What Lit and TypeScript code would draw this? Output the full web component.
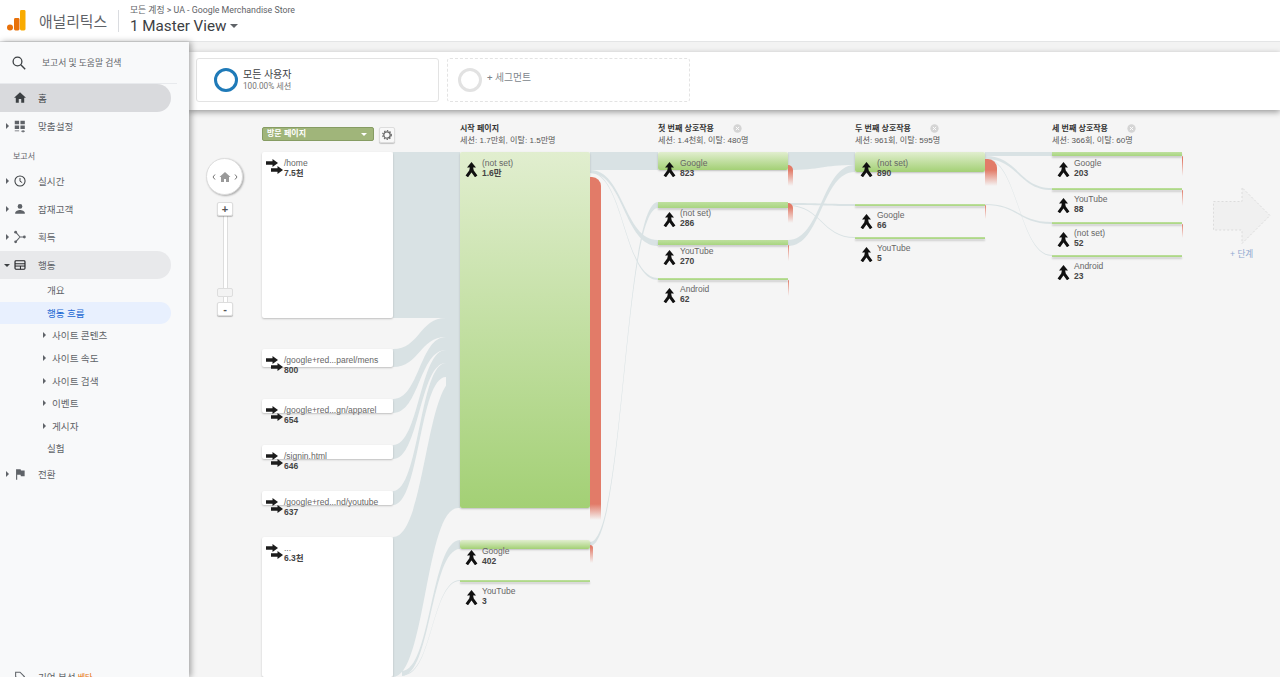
import { LitElement, html, css, svg } from "lit";
import { customElement } from "lit/decorators.js";

type FlowNode = {
  x: number;
  y: number;
  h: number;
  name: string;
  count: string;
  kind: "start" | "page";
  drop?: [number, number, number];
};

const OX = 189;
const OY = 110;

const nodes: FlowNode[] = [
  { x: 262, y: 152, h: 166, name: "/home", count: "7.5천", kind: "start" },
  { x: 262, y: 349, h: 18, name: "/google+red...parel/mens", count: "800", kind: "start" },
  { x: 262, y: 399, h: 14, name: "/google+red...gn/apparel", count: "654", kind: "start" },
  { x: 262, y: 445, h: 14, name: "/signin.html", count: "646", kind: "start" },
  { x: 262, y: 491, h: 14, name: "/google+red...nd/youtube", count: "637", kind: "start" },
  { x: 262, y: 537, h: 140, name: "...", count: "6.3천", kind: "start" },

  { x: 460, y: 152, h: 356, name: "(not set)", count: "1.6만", kind: "page", drop: [11, 177, 343] },
  { x: 460, y: 540, h: 9, name: "Google", count: "402", kind: "page", drop: [3, 545, 18] },
  { x: 460, y: 580, h: 2, name: "YouTube", count: "3", kind: "page" },

  { x: 658, y: 152, h: 18, name: "Google", count: "823", kind: "page", drop: [5, 165, 21] },
  { x: 658, y: 202, h: 6, name: "(not set)", count: "286", kind: "page", drop: [5, 203, 20] },
  { x: 658, y: 240, h: 5, name: "YouTube", count: "270", kind: "page", drop: [1, 245, 16] },
  { x: 658, y: 278, h: 2, name: "Android", count: "62", kind: "page", drop: [1, 280, 16] },

  { x: 855, y: 152, h: 20, name: "(not set)", count: "890", kind: "page", drop: [12, 159, 27] },
  { x: 855, y: 204, h: 2, name: "Google", count: "66", kind: "page", drop: [1, 205, 14] },
  { x: 855, y: 237, h: 2, name: "YouTube", count: "5", kind: "page" },

  { x: 1052, y: 152, h: 4, name: "Google", count: "203", kind: "page", drop: [1, 156, 20] },
  { x: 1052, y: 188, h: 2, name: "YouTube", count: "88", kind: "page", drop: [1, 190, 16] },
  { x: 1052, y: 222, h: 2, name: "(not set)", count: "52", kind: "page", drop: [1, 224, 14] },
  { x: 1052, y: 255, h: 2, name: "Android", count: "23", kind: "page" },
];

// x1, top1, bottom1, x2, top2, bottom2
const links: number[][] = [
  [393, 152, 318, 460, 152, 318],
  [393, 349, 367, 446, 318, 337],
  [393, 399, 413, 446, 337, 350],
  [393, 445, 459, 446, 350, 363],
  [393, 491, 505, 446, 363, 377],
  [393, 537, 677, 458, 377, 508],
  [446, 318, 508, 460, 318, 508],
  [402, 671, 676, 460, 540, 549],
  [404, 674, 675, 460, 580, 581],

  [590, 152, 170, 658, 152, 170],
  [590, 170, 173, 658, 240, 246],
  [590, 172, 173, 658, 278, 280],
  [590, 542, 546, 658, 202, 208],

  [788, 152, 170, 855, 152, 165],
  [788, 240, 246, 855, 165, 172],
  [788, 203, 205, 855, 204, 206],
  [788, 205, 206, 855, 237, 238],

  [985, 152, 156, 1052, 152, 156],
  [985, 156, 159, 1052, 188, 190],
  [985, 158, 159, 1052, 255, 256],
  [985, 204, 205, 1052, 222, 224],
];

const columns = [
  { x: 460, title: "시작 페이지", sub: "세션: 1.7만회, 이탈: 1.5만명", close: false },
  { x: 658, title: "첫 번째 상호작용", sub: "세션: 1.4천회, 이탈: 480명", close: true },
  { x: 855, title: "두 번째 상호작용", sub: "세션: 961회, 이탈: 595명", close: true },
  { x: 1052, title: "세 번째 상호작용", sub: "세션: 366회, 이탈: 60명", close: true },
];

const bandPath = ([x1, a1, b1, x2, a2, b2]: number[]) => {
  const m = (x1 + x2) / 2;
  return `M${x1} ${a1}C${m} ${a1} ${m} ${a2} ${x2} ${a2}L${x2} ${b2}C${m} ${b2} ${m} ${b1} ${x1} ${b1}Z`;
};

const icons: Record<string, unknown> = {
  home: svg`<path d="M6.6 13.5V9.2h2.8v4.3h3.4V7.8h2L8 1.5 1.2 7.8h2v5.7z" fill="#3c4043"/>`,
  custom: svg`<path d="M2 2h5v4H2zM8.5 2h5v4h-5zM2 7.5h5v4H2zM2 13h5v1H2zM8.5 7.5h5v4h-5zM11 12.5h1v1h1.5v1H12v1h-1v-1H9.5v-1H11z" fill="#5f6368"/>`,
  clock: svg`<circle cx="8" cy="8" r="5.8" fill="none" stroke="#3c4043" stroke-width="1.2"/><path d="M8 4.6V8.3l2.5 1.5" fill="none" stroke="#3c4043" stroke-width="1.1"/>`,
  person: svg`<circle cx="8" cy="5" r="2.7" fill="#5f6368"/><path d="M2.5 12.5c0-2.2 3.4-3.3 5.5-3.3s5.5 1.1 5.5 3.3v.8h-11z" fill="#5f6368"/>`,
  acquire: svg`<path d="M3 2.5 8 8l-5 5.5M8 8h5" fill="none" stroke="#5f6368" stroke-width="1.2"/><circle cx="3" cy="2.5" r="1.6" fill="#5f6368"/><circle cx="3" cy="13.5" r="1.6" fill="#5f6368"/><circle cx="13" cy="8" r="1.6" fill="#5f6368"/>`,
  behavior: svg`<rect x="2.3" y="3.2" width="11.4" height="9.6" rx="1" fill="none" stroke="#202124" stroke-width="1.3"/><path d="M2.3 6.6h11.4M2.3 9.2h11.4M8.5 9.2v3.6" stroke="#202124" stroke-width="1.1" fill="none"/>`,
  flag: svg`<path d="M3.5 2.5h5.2l.4 1.6h4.2v6.4H9l-.4-1.6H4.8v5.6H3.5z" fill="#5f6368"/>`,
  attribution: svg`<path d="M3 2.5h5l5 5-5 5-5-5z" fill="none" stroke="#5f6368" stroke-width="1.2"/>`,
};

const navIcon = (name: string) =>
  html`<svg class="nav-icon" viewBox="0 0 16 16">${icons[name]}</svg>`;

const caret = (open = false) =>
  html`<span class=${open ? "caret open" : "caret"}></span>`;

const mergeIcon = html`<svg class="node-icon merge" viewBox="0 0 13 15">
  <path d="M6.5 0 11 5.5H2z" fill="#111" />
  <path d="M1.8 14.4 5.6 9.2 6.5 5 7.4 9.2 11.2 14.4" fill="none" stroke="#111" stroke-width="3" stroke-linejoin="round" />
</svg>`;

const entryIcon = html`<svg class="node-icon entry" viewBox="0 0 18 18">
  <path d="M0 2.3H6.5V0L12 4 6.5 8V5.7H0z" fill="#1c1c1c" />
  <path d="M5 9.3H11.5V7L17 11 11.5 15V12.7H5z" fill="#1c1c1c" />
</svg>`;

const closeIcon = html`<svg class="close" viewBox="0 0 10 10">
  <circle cx="5" cy="5" r="4.6" fill="#d4d4d4" />
  <path d="M3.2 3.2 6.8 6.8M6.8 3.2 3.2 6.8" stroke="#fff" stroke-width="1" />
</svg>`;

@customElement("app-root")
export class AppRoot extends LitElement {
  static styles = css`
    :host {
      display: block;
      width: 1280px;
      height: 677px;
      overflow: hidden;
      font-family: Roboto, "Noto Sans CJK KR", sans-serif;
      background: #fff;
      color: #5f6368;
    }

    .header {
      height: 41px;
      display: flex;
      align-items: center;
      border-bottom: 1px solid #e4e5e6;
      box-sizing: content-box;
    }
    .logo {
      width: 20px;
      height: 22px;
      margin: 0 13px 2px 6px;
    }
    .product {
      font-size: 14.8px;
      width: 79px;
      color: #5f6368;
      white-space: nowrap;
    }
    .divider {
      width: 1px;
      height: 22px;
      background: #dadce0;
      margin-right: 11px;
    }
    .crumb {
      font-size: 8.8px;
      line-height: 11px;
      color: #5f6368;
      white-space: nowrap;
    }
    .view {
      font-size: 15.2px;
      line-height: 20px;
      color: #3c4043;
      display: flex;
      align-items: center;
      gap: 4px;
      white-space: nowrap;
    }
    .view i {
      border: 4px solid transparent;
      border-top: 4px solid #5f6368;
      border-bottom: 0;
      width: 0;
    }

    .body {
      display: flex;
      height: 635px;
    }

    .side {
      width: 189px;
      flex: none;
      background: #f8f9fa;
      box-shadow: 2px 0 6px rgba(0, 0, 0, 0.35);
      position: relative;
      z-index: 3;
      overflow: hidden;
      font-size: 9.6px;
      color: #5f6368;
    }
    .search {
      height: 41px;
      width: 177px;
      display: flex;
      align-items: center;
      border-bottom: 1px solid #e8eaed;
      font-size: 8.8px;
    }
    .search svg {
      width: 16px;
      height: 16px;
      margin: 0 15px 0 11px;
    }
    .row {
      height: 28px;
      width: 171px;
      display: flex;
      align-items: center;
      white-space: nowrap;
    }
    .row.pill {
      background: #e8e9eb;
      border-radius: 0 14px 14px 0;
    }
    .row.pill.dark {
      background: #d9dadd;
      color: #3c4043;
    }
    .row .slot {
      width: 13px;
      display: flex;
      justify-content: center;
      padding-left: 1px;
      box-sizing: border-box;
    }
    .nav-icon {
      width: 14px;
      height: 14px;
      margin-right: 11px;
      flex: none;
    }
    .caret {
      width: 0;
      border-left: 3.5px solid #5f6368;
      border-top: 3px solid transparent;
      border-bottom: 3px solid transparent;
    }
    .caret.open {
      border-top: 3.5px solid #3c4043;
      border-left: 3.5px solid transparent;
      border-right: 3.5px solid transparent;
      border-bottom: 0;
    }
    .section {
      height: 27px;
      padding: 3px 0 0 13px;
      box-sizing: border-box;
      display: flex;
      align-items: center;
      font-size: 8px;
    }
    .sub {
      height: 22.6px;
      width: 171px;
      display: flex;
      align-items: center;
      padding-left: 47px;
      box-sizing: border-box;
      white-space: nowrap;
      gap: 6px;
    }
    .sub.nested {
      padding-left: 43px;
    }
    .sub.active {
      background: #e8f0fe;
      color: #1967d2;
      border-radius: 0 12px 12px 0;
    }
    .attribution {
      margin-top: 175px;
    }
    .attribution sup {
      font-size: 8px;
      color: #e8710a;
      margin-left: 2px;
    }

    .main {
      flex: 1;
      display: flex;
      flex-direction: column;
      min-width: 0;
      background: #f5f5f5;
    }
    .strip {
      height: 10px;
      background: #f3f3f3;
      flex: none;
    }
    .segments {
      height: 58px;
      flex: none;
      background: #fff;
      display: flex;
      gap: 8px;
      padding: 6px 0 0 7px;
      box-sizing: border-box;
      box-shadow: 0 2px 6px rgba(0, 0, 0, 0.38);
      position: relative;
      z-index: 2;
    }
    .segment {
      width: 243px;
      height: 44px;
      box-sizing: border-box;
      border: 1px solid #e3e3e3;
      border-radius: 3px;
      display: flex;
      align-items: center;
      padding-left: 17px;
      gap: 5px;
    }
    .segment.add {
      border: 1px dashed #e3e3e3;
      padding-left: 10px;
      font-size: 9.8px;
      color: #80868b;
    }
    .segment.add span {
      margin-bottom: 7px;
    }
    .ring {
      width: 24px;
      height: 24px;
      border-radius: 50%;
      border: 3px solid #1f7ab8;
      box-sizing: border-box;
    }
    .add .ring {
      border-color: #e2e2e2;
    }
    .seg-title {
      font-size: 10px;
      line-height: 12px;
      color: #3c4043;
    }
    .seg-sub {
      font-size: 8.2px;
      line-height: 10px;
      color: #757575;
    }

    .canvas {
      position: relative;
      flex: 1;
      overflow: hidden;
      font-family: "Liberation Sans", "Noto Sans CJK KR", sans-serif;
    }
    .links {
      position: absolute;
      inset: 0;
      width: 1091px;
      height: 567px;
    }
    .node {
      position: absolute;
      width: 130px;
      box-shadow: 0 1px 2px rgba(0, 0, 0, 0.22);
    }
    .node.start {
      width: 131px;
      background: #fff;
      border-radius: 2px;
    }
    .node.page {
      background: linear-gradient(#e1eecf, #a3d075);
      border-radius: 2px;
    }
    .node.thin {
      background: linear-gradient(#bfe09f, #a8d580);
      border-radius: 0;
      box-shadow: 0 2px 2px rgba(0, 0, 0, 0.16);
    }
    .label {
      position: absolute;
      width: 130px;
      height: 30px;
    }
    .label b,
    .label span {
      position: absolute;
      left: 22px;
      font-size: 8.5px;
      line-height: 10px;
      white-space: nowrap;
    }
    .label span {
      top: 6px;
      color: #666;
    }
    .label b {
      top: 16px;
      color: #444;
    }
    .node-icon {
      position: absolute;
    }
    .merge {
      left: 5px;
      top: 10px;
      width: 13px;
      height: 15px;
    }
    .entry {
      left: 4px;
      top: 7px;
      width: 18px;
      height: 18px;
    }
    .drop {
      position: absolute;
      background: linear-gradient(#e27b68 0, #e27b68 calc(100% - 16px), rgba(226, 123, 104, 0));
      border-radius: 0 9px 0 0;
    }
    .col-head {
      position: absolute;
      top: 13px;
      white-space: nowrap;
      color: #333;
    }
    .col-title {
      font-size: 8px;
      line-height: 12px;
      font-weight: 700;
      display: flex;
    }
    .col-title span {
      width: 75px;
    }
    .col-sub {
      font-size: 8.1px;
      line-height: 12px;
      color: #555;
    }
    .close {
      width: 9px;
      height: 9px;
      margin-top: 1px;
    }

    .dropdown {
      position: absolute;
      left: 73px;
      top: 17px;
      width: 112px;
      height: 14px;
      background: #a0b57a;
      border: 1px solid #869c63;
      border-radius: 2px;
      box-sizing: border-box;
      color: #fff;
      font-size: 8px;
      font-weight: 700;
      line-height: 12px;
      padding-left: 4px;
    }
    .dropdown i {
      position: absolute;
      right: 6px;
      top: 5px;
      border: 3px solid transparent;
      border-top: 3px solid #fff;
      border-bottom: 0;
    }
    .gear {
      position: absolute;
      left: 190px;
      top: 17px;
      width: 16px;
      height: 16px;
      background: #f8f8f8;
      border: 1px solid #ddd;
      box-sizing: border-box;
      border-radius: 2px;
      box-shadow: 0 1px 1px rgba(0, 0, 0, 0.2);
      display: flex;
      align-items: center;
      justify-content: center;
    }
    .pan {
      position: absolute;
      left: 17px;
      top: 48px;
      width: 37px;
      height: 37px;
      border-radius: 50%;
      background: #fff;
      border: 1px solid #ddd;
      box-sizing: border-box;
      box-shadow: 1px 1px 2px rgba(0, 0, 0, 0.3);
      display: flex;
      align-items: center;
      justify-content: center;
    }
    .track {
      position: absolute;
      left: 34px;
      top: 106px;
      width: 5px;
      height: 86px;
      background: #fff;
      border-left: 1px solid #ddd;
      border-right: 1px solid #ddd;
      box-sizing: border-box;
    }
    .zoom-btn {
      position: absolute;
      left: 28px;
      width: 16px;
      height: 14px;
      background: #fff;
      border: 1px solid #ddd;
      box-sizing: border-box;
      border-radius: 2px;
      box-shadow: 0 1px 1px rgba(0, 0, 0, 0.25);
      text-align: center;
      font-size: 11px;
      line-height: 12px;
      font-weight: 700;
      color: #555;
    }
    .zoom-btn.handle {
      background: #f3f3f3;
      height: 9px;
      box-shadow: none;
    }
    .next {
      position: absolute;
      left: 1024px;
      top: 77px;
      width: 58px;
      height: 57px;
    }
    .next-label {
      position: absolute;
      left: 1041px;
      top: 139px;
      font-size: 8.6px;
      line-height: 11px;
      color: #8fa8d0;
      white-space: nowrap;
    }
  `;

  private renderNode(n: FlowNode) {
    const thin = n.kind === "page" && n.h < 8;
    const cls = `node ${n.kind} ${thin ? "thin" : ""}`;
    const left = n.x - OX;
    const top = n.y - OY;
    return html`
      <div class=${cls} style="left:${left}px;top:${top}px;height:${n.h}px"></div>
      ${n.drop
        ? html`<div
            class="drop"
            style="left:${left + 130}px;top:${n.drop[1] - OY}px;width:${n.drop[0]}px;height:${n.drop[2]}px"
          ></div>`
        : ""}
      <div class="label" style="left:${left}px;top:${top}px">
        ${n.kind === "start" ? entryIcon : mergeIcon}
        <span>${n.name}</span><b>${n.count}</b>
      </div>
    `;
  }

  render() {
    return html`
      <div class="header">
        <svg class="logo" viewBox="0 0 20 22">
          <circle cx="4" cy="18.5" r="3" fill="#e8710a" />
          <rect x="8" y="9" width="5.5" height="12.5" rx="1.4" fill="#e8710a" />
          <rect x="14" y="1" width="5.5" height="20.5" rx="1.4" fill="#f9ab00" />
        </svg>
        <div class="product">애널리틱스</div>
        <div class="divider"></div>
        <div>
          <div class="crumb">모든 계정 &gt; UA - Google Merchandise Store</div>
          <div class="view">1 Master View <i></i></div>
        </div>
      </div>

      <div class="body">
        <nav class="side">
          <div class="search">
            <svg viewBox="0 0 16 16">
              <circle cx="6.5" cy="6.5" r="4.4" fill="none" stroke="#3c4043" stroke-width="1.3" />
              <path d="M9.8 9.8 14.2 14.2" stroke="#3c4043" stroke-width="1.4" />
            </svg>
            보고서 및 도움말 검색
          </div>
          <div class="row pill dark"><span class="slot"></span>${navIcon("home")}홈</div>
          <div class="row"><span class="slot">${caret()}</span>${navIcon("custom")}맞춤설정</div>
          <div class="section">보고서</div>
          <div class="row"><span class="slot">${caret()}</span>${navIcon("clock")}실시간</div>
          <div class="row"><span class="slot">${caret()}</span>${navIcon("person")}잠재고객</div>
          <div class="row"><span class="slot">${caret()}</span>${navIcon("acquire")}획득</div>
          <div class="row pill"><span class="slot">${caret(true)}</span>${navIcon("behavior")}행동</div>
          <div class="sub">개요</div>
          <div class="sub active">행동 흐름</div>
          <div class="sub nested">${caret()}사이트 콘텐츠</div>
          <div class="sub nested">${caret()}사이트 속도</div>
          <div class="sub nested">${caret()}사이트 검색</div>
          <div class="sub nested">${caret()}이벤트</div>
          <div class="sub nested">${caret()}게시자</div>
          <div class="sub">실험</div>
          <div class="row"><span class="slot">${caret()}</span>${navIcon("flag")}전환</div>
          <div class="row attribution"><span class="slot"></span>${navIcon("attribution")}기여 분석<sup>베타</sup></div>
        </nav>

        <div class="main">
          <div class="strip"></div>
          <div class="segments">
            <div class="segment">
              <div class="ring"></div>
              <div>
                <div class="seg-title">모든 사용자</div>
                <div class="seg-sub">100.00% 세션</div>
              </div>
            </div>
            <div class="segment add">
              <div class="ring"></div>
              <span>+ 세그먼트</span>
            </div>
          </div>

          <div class="canvas">
            <svg class="links" viewBox="${OX} ${OY} 1091 567">
              ${links.map((l) => svg`<path d=${bandPath(l)} fill="#d9e2e4" />`)}
            </svg>

            <div class="dropdown">방문 페이지<i></i></div>
            <div class="gear">
              <svg width="10" height="10" viewBox="0 0 10 10">
                <circle cx="5" cy="5" r="3.2" fill="none" stroke="#666" stroke-width="1.3" />
                <circle cx="5" cy="5" r="4.3" fill="none" stroke="#666" stroke-width="1.2" stroke-dasharray="1.4 1.4" />
              </svg>
            </div>

            <div class="pan">
              <svg width="26" height="12" viewBox="0 0 26 12">
                <path d="M3 3.5 1 6l2 2.5M23 3.5 25 6l-2 2.5" fill="none" stroke="#666" stroke-width="0.9" />
                <path d="M13 1 7.5 6H9v5h3V8h2v3h3V6h1.5z" fill="#9a9a9a" />
              </svg>
            </div>
            <div class="track"></div>
            <div class="zoom-btn" style="top:92px">+</div>
            <div class="zoom-btn handle" style="top:178px"></div>
            <div class="zoom-btn" style="top:192px">-</div>

            ${columns.map(
              (c) => html`<div class="col-head" style="left:${c.x - OX}px">
                <div class="col-title"><span>${c.title}</span>${c.close ? closeIcon : ""}</div>
                <div class="col-sub">${c.sub}</div>
              </div>`,
            )}
            ${nodes.map((n) => this.renderNode(n))}

            <svg class="next" viewBox="0 0 58 57">
              <path
                d="M0.5 14.5H29V0.5L57 28.5 29 56.5V43H0.5z"
                fill="#f0f0f0"
                stroke="#dcdcdc"
                stroke-width="1"
                stroke-dasharray="2 2"
              />
            </svg>
            <div class="next-label">+ 단계</div>
          </div>
        </div>
      </div>
    `;
  }
}
